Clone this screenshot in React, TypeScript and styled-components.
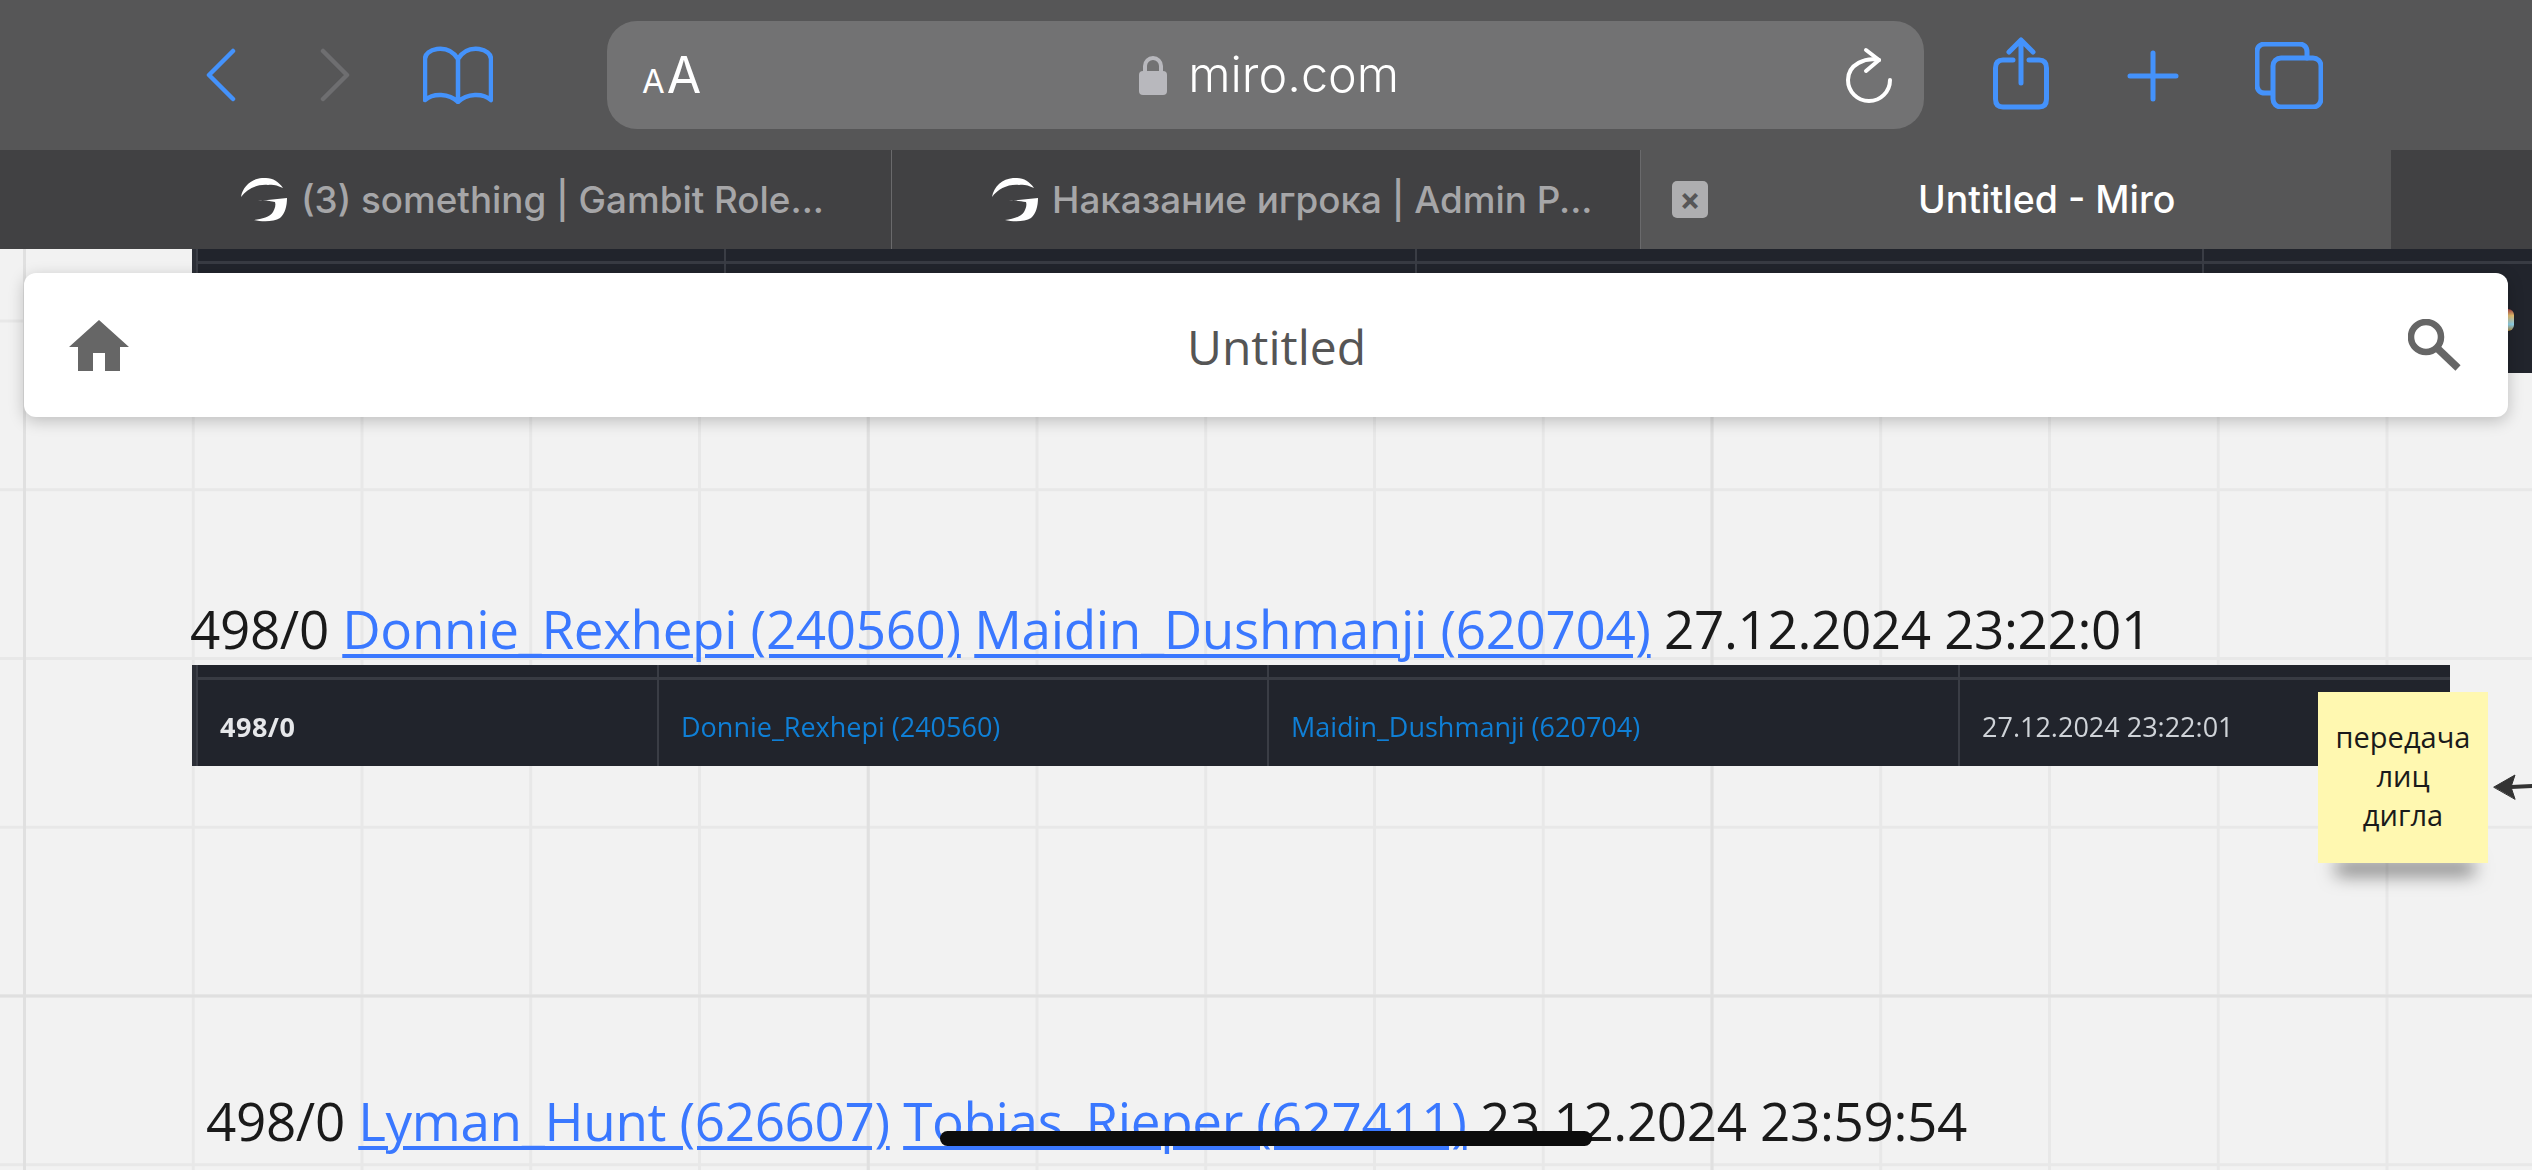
import React from "react";
import styled, { createGlobalStyle } from "styled-components";

const Global = createGlobalStyle`
  html, body { margin: 0; padding: 0; background: #f2f2f2; }
  body { width: 2532px; height: 1170px; overflow: hidden; }
  #root { width: 2532px; height: 1170px; }
`;

const Page = styled.div`
  width: 2532px;
  height: 1170px;
  display: flex;
  flex-direction: column;
  overflow: hidden;
  position: relative;
  font-family: "Inter", "Liberation Sans", sans-serif;
`;

const Toolbar = styled.header`
  height: 150px;
  flex: none;
  background: #565657;
  display: flex;
  align-items: center;
  padding-left: 206px;
`;

const ToolIcon = styled.svg<{ $gap: number }>`
  flex: none;
  display: block;
  margin-right: ${(p) => p.$gap}px;
  fill: none;
  stroke: #4492fb;
  stroke-linecap: round;
  stroke-linejoin: round;
`;

const AddressBar = styled.div`
  width: 1317px;
  height: 108px;
  flex: none;
  margin-right: 69px;
  background: #727273;
  border-radius: 30px;
  display: flex;
  align-items: center;
  box-sizing: border-box;
  padding: 0 32px 0 35px;
`;

const TextSize = styled.div`
  display: flex;
  align-items: baseline;
  color: #fff;
  font-weight: 400;
  line-height: 1;
`;

const SmallA = styled.span`
  font-size: 33px;
`;

const BigA = styled.span`
  font-size: 50px;
  margin-left: 2px;
`;

const Address = styled.div`
  flex: 1;
  display: flex;
  align-items: center;
  justify-content: center;
  gap: 21px;
  color: #fff;
  font-size: 48.5px;
  font-weight: 300;
  margin-left: -9px;
`;

const Domain = styled.span`
  line-height: 1;
`;

const TabBar = styled.nav`
  height: 99px;
  flex: none;
  background: #414143;
  display: grid;
  grid-template-columns: 892px 749px 750px 141px;
`;

const Tab = styled.div<{ $active?: boolean; $pad: number }>`
  display: flex;
  align-items: center;
  box-sizing: border-box;
  padding-left: ${(p) => p.$pad}px;
  gap: 14px;
  color: #a6a6a8;
  font-size: 36.8px;
  font-weight: 500;
  white-space: nowrap;
  border-right: ${(p) => (p.$active ? "none" : "1px solid #6a6a6c")};
  background: ${(p) => (p.$active ? "#565657" : "transparent")};
`;

const CloseBox = styled.div`
  width: 36px;
  height: 37px;
  flex: none;
  border-radius: 5px;
  background: #aeaeb0;
  color: #565657;
  font-size: 31px;
  font-weight: 700;
  line-height: 36px;
  text-align: center;
`;

const ActiveTitle = styled.span`
  color: #fff;
  font-size: 37.5px;
  margin-left: 196px;
`;

const TabSpacer = styled.div``;

const Canvas = styled.main`
  flex: 1;
  position: relative;
  overflow: hidden;
  background-color: #f2f2f2;
  background-image:
    linear-gradient(to right, #e0e0e0 3px, transparent 3px),
    linear-gradient(to bottom, #e0e0e0 3px, transparent 3px),
    linear-gradient(to right, #e8e8e8 3px, transparent 3px),
    linear-gradient(to bottom, #e8e8e8 3px, transparent 3px);
  background-size: 843.75px 100%, 100% 843.75px, 168.75px 100%, 100% 168.75px;
  background-position: 23px 0, 0 745.5px, 23px 0, 0 70.5px;
  font-family: "Open Sans", "Noto Sans", sans-serif;
`;

const Screenshot = styled.div<{ $left: number; $top: number; $width: number; $height: number; $cols: string }>`
  position: absolute;
  left: ${(p) => p.$left}px;
  top: ${(p) => p.$top}px;
  width: ${(p) => p.$width}px;
  height: ${(p) => p.$height}px;
  background: #21242c;
  display: grid;
  grid-template-columns: ${(p) => p.$cols};
  box-sizing: border-box;
  border-left: 4px solid #2c2f37;
  overflow: hidden;
`;

const Cell = styled.div<{ $lineTop: number; $bold?: boolean; $link?: boolean }>`
  box-sizing: border-box;
  border-left: 2px solid #3a3d45;
  display: flex;
  align-items: center;
  padding: 22px 0 0 22px;
  font-size: 27px;
  letter-spacing: ${(p) => (p.$bold ? "0.5px" : "0")};
  white-space: nowrap;
  filter: blur(0.4px);
  font-weight: ${(p) => (p.$bold ? 700 : 400)};
  color: ${(p) => (p.$link ? "#0f7fd6" : p.$bold ? "#e6e7ea" : "#cfd3d8")};
  background-image: linear-gradient(#383b43, #383b43);
  background-repeat: no-repeat;
  background-size: 100% 3px;
  background-position: 0 ${(p) => p.$lineTop}px;
`;

const Heading = styled.div<{ $left: number; $top: number }>`
  position: absolute;
  left: ${(p) => p.$left}px;
  top: ${(p) => p.$top}px;
  color: #1a1a1a;
  font-size: 53px;
  letter-spacing: -0.36px;
  line-height: 72px;
  white-space: nowrap;
`;

const PlayerLink = styled.a`
  color: #3a78ff;
  text-decoration: underline;
  text-decoration-thickness: 4px;
  text-underline-offset: 5px;
`;

const Sticky = styled.div`
  position: absolute;
  left: 2318px;
  top: 443px;
  width: 170px;
  height: 171px;
  box-sizing: border-box;
  background: #fff8b0;
  color: #1a1a1a;
  font-size: 29px;
  line-height: 39px;
  text-align: center;
  display: flex;
  align-items: center;
  justify-content: center;
  padding-bottom: 4px;
  &::after {
    content: "";
    position: absolute;
    left: 18px;
    right: 14px;
    bottom: 0;
    height: 14px;
    z-index: -1;
    box-shadow: 0 12px 18px rgba(0, 0, 0, 0.5);
  }
`;

const StickyStack = styled.div`
  position: absolute;
  inset: 0;
  z-index: 1;
`;

const ArrowMark = styled.svg`
  position: absolute;
  left: 2492px;
  top: 520px;
  fill: none;
  stroke: #333;
  stroke-width: 4;
  stroke-linecap: round;
  stroke-linejoin: round;
`;

const Glint = styled.div`
  position: absolute;
  left: 2508px;
  top: 60px;
  width: 6px;
  height: 22px;
  border-radius: 0 6px 6px 0;
  background: linear-gradient(#a44, #e8c070 30%, #8fd4ee 70%, #b08a40);
`;

const TopCard = styled.div`
  position: absolute;
  left: 24px;
  top: 24px;
  width: 2484px;
  height: 144px;
  box-sizing: border-box;
  padding: 0 46px 0 45px;
  background: #fff;
  border-radius: 12px;
  box-shadow: 0 4px 16px rgba(0, 0, 0, 0.22);
  display: flex;
  align-items: center;
  justify-content: space-between;
`;

const BoardTitle = styled.div`
  color: #555;
  font-size: 48px;
  line-height: 1;
  margin: 3px 0 0 16px;
`;

const CardIcon = styled.svg`
  display: block;
  flex: none;
  fill: #666;
`;

const HomeIndicator = styled.div`
  position: absolute;
  left: 940px;
  top: 1131px;
  width: 652px;
  height: 15px;
  border-radius: 8px;
  background: #0c0c0c;
`;

const Gambit = () => (
  <svg width="46" height="44" viewBox="11 8 46 44" style={{ flex: "none", display: "block" }} fill="#fff">
    <path d="M11 27C13 15 24 7 36 8C43 8 49 12 53 18C47 15 42 14 38 15C27 14 17 19 11 27Z" />
    <path d="M28 31L57 28C57 36 55 44 50 48C44 52 32 52 24 50C32 49 40 47 43 42C45 38 46 35 45 32C40 31 34 30 28 31Z" />
  </svg>
);

export default function App() {
  return (
    <Page>
      <Global />
      <Toolbar>
        <ToolIcon $gap={84} width="30" height="54" viewBox="0 0 30 54" strokeWidth="4.5">
          <path d="M27 3L3 27L27 51" />
        </ToolIcon>
        <ToolIcon $gap={73} width="30" height="54" viewBox="0 0 30 54" strokeWidth="4.5" style={{ stroke: "#6e6e70" }}>
          <path d="M3 3L27 27L3 51" />
        </ToolIcon>
        <ToolIcon $gap={114} width="70" height="58" viewBox="0 0 70 58" strokeWidth="4.5">
          <path d="M35 13C30 5 22 2 14 3C7 4 2 8 2 13V54C10 47 26 47 35 56C44 47 60 47 68 54V13C68 8 63 4 56 3C48 2 40 5 35 13V56" />
        </ToolIcon>
        <AddressBar>
          <TextSize>
            <SmallA>A</SmallA>
            <BigA>A</BigA>
          </TextSize>
          <Address>
            <svg width="28" height="40" viewBox="0 0 28 40" style={{ display: "block", flex: "none" }}>
              <path d="M6 17V11a8 8 0 0 1 16 0v6" fill="none" stroke="#b8b8bd" strokeWidth="4" />
              <rect x="0" y="16" width="28" height="24" rx="4" fill="#b8b8bd" />
            </svg>
            <Domain>miro.com</Domain>
          </Address>
          <svg width="46" height="56" viewBox="0 0 46 56" fill="none" stroke="#fff" strokeWidth="4" strokeLinecap="round" strokeLinejoin="round" style={{ display: "block", flex: "none" }}>
            <path d="M33 13C20 10 2 17 2 33A21 21 0 0 0 44 33" />
            <path d="M20 3L33 13L20 24" />
          </svg>
        </AddressBar>
        <ToolIcon $gap={78} width="56" height="73" viewBox="0 0 56 73" strokeWidth="5" style={{ marginTop: -4 }}>
          <path d="M20 23H10C5 23 2.500 26 2.500 31V62C2.500 67 5 70 10 70H46C51 70 53.500 67 53.500 62V31C53.500 26 51 23 46 23H36" />
          <path d="M28 46V3M16 15L28 3L40 15" />
        </ToolIcon>
        <ToolIcon $gap={76} width="52" height="52" viewBox="0 0 52 52" strokeWidth="5" style={{ marginTop: 2 }}>
          <path d="M26 3V49M3 26H49" />
        </ToolIcon>
        <ToolIcon $gap={0} width="68" height="67" viewBox="0 0 68 67" strokeWidth="5">
          <path d="M16 51H10C5 51 2 48 2 43V10C2 5 5 2 10 2H44C49 2 52 5 52 10V16" />
          <rect x="18" y="16" width="48" height="49" rx="8" />
        </ToolIcon>
      </Toolbar>
      <TabBar>
        <Tab $pad={241}>
          <Gambit />
          <span>(3) something | Gambit Role...</span>
        </Tab>
        <Tab $pad={100}>
          <Gambit />
          <span>Наказание игрока | Admin P...</span>
        </Tab>
        <Tab $active $pad={31}>
          <CloseBox>×</CloseBox>
          <ActiveTitle>Untitled - Miro</ActiveTitle>
        </Tab>
        <TabSpacer />
      </TabBar>
      <Canvas>
        <Screenshot $left={192} $top={0} $width={2340} $height={124} $cols="528px 691px 787px 1fr">
          <Cell $lineTop={12} />
          <Cell $lineTop={12} />
          <Cell $lineTop={12} />
          <Cell $lineTop={12} />
        </Screenshot>
        <Glint />
        <TopCard>
          <CardIcon width="60" height="51" viewBox="0 0 60 51">
            <path d="M30 0L60 27H51V51H36V33H24V51H9V27H0Z" />
          </CardIcon>
          <BoardTitle>Untitled</BoardTitle>
          <CardIcon width="54" height="52" viewBox="0 0 54 52" style={{ fill: "none", stroke: "#666" }}>
            <circle cx="18" cy="18" r="15" strokeWidth="6.500" />
            <path d="M29 29L50 49" strokeWidth="7.500" />
          </CardIcon>
        </TopCard>
        <Heading $left={190} $top={344}>
          498/0 <PlayerLink>Donnie_Rexhepi (240560)</PlayerLink> <PlayerLink>Maidin_Dushmanji (620704)</PlayerLink> 27.12.2024 23:22:01
        </Heading>
        <Screenshot $left={192} $top={416} $width={2258} $height={101} $cols="461px 610px 691px 1fr">
          <Cell $lineTop={12} $bold>498/0</Cell>
          <Cell $lineTop={12} $link>Donnie_Rexhepi (240560)</Cell>
          <Cell $lineTop={12} $link>Maidin_Dushmanji (620704)</Cell>
          <Cell $lineTop={12}>27.12.2024 23:22:01</Cell>
        </Screenshot>
        <StickyStack>
          <Sticky>
            <span>
              передача
              <br />
              лиц
              <br />
              дигла
            </span>
          </Sticky>
          <ArrowMark width="40" height="36" viewBox="0 0 40 36">
            <path d="M19 18L40 17" />
            <path d="M2 18L23 6L19 18L23 30Z" fill="#333" strokeWidth="1" />
          </ArrowMark>
        </StickyStack>
        <Heading $left={206} $top={836}>
          498/0 <PlayerLink>Lyman_Hunt (626607)</PlayerLink> <PlayerLink>Tobias_Rieper (627411)</PlayerLink> 23.12.2024 23:59:54
        </Heading>
      </Canvas>
      <HomeIndicator />
    </Page>
  );
}
